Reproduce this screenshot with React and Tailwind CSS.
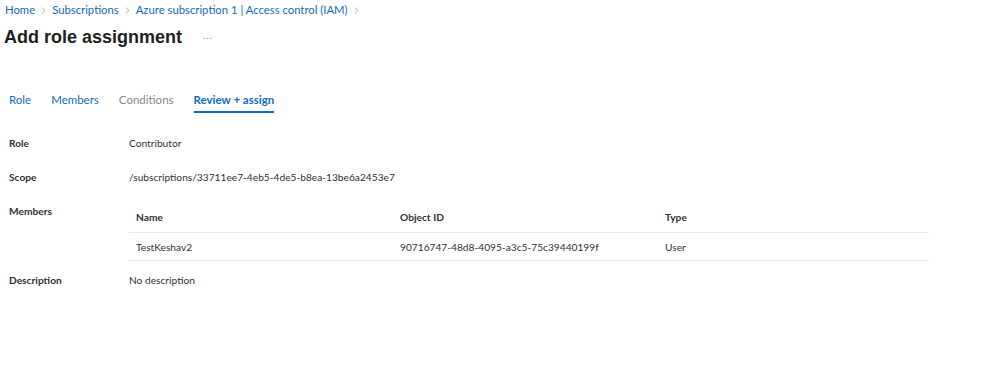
import { ChevronRight } from 'lucide-react';

const crumbs = ['Home', 'Subscriptions', 'Azure subscription 1 | Access control (IAM)'];

const tabs = [
  { label: 'Role', color: 'text-[#0f6cbd]' },
  { label: 'Members', color: 'text-[#0f6cbd]' },
  { label: 'Conditions', color: 'text-[#8a8886]' },
  { label: 'Review + assign', color: 'text-[#0f6cbd] font-bold', active: true },
];

const Row = ({ label, children, className = '' }) => (
  <div className={`flex ${className}`}>
    <div className="w-[120px] shrink-0 font-bold text-[#323130]">{label}</div>
    <div className="flex-1">{children}</div>
  </div>
);

export default function App() {
  return (
    <div
      className="w-[996px] h-[391px] bg-white text-[10.2px] leading-[14px] text-[#323130]"
      style={{ fontFamily: 'Lato, "Open Sans", sans-serif' }}
    >
      <nav className="flex items-center h-[19px] pl-[5px] pt-[1px] text-[11.3px] text-[#0f6cbd]">
        {crumbs.map((c) => (
          <span key={c} className="flex items-center">
            <span>{c}</span>
            <ChevronRight size={11} strokeWidth={1.5} className="mx-[3px] text-[#8a8886]" />
          </span>
        ))}
      </nav>

      <div className="flex items-center h-[36px] pl-[4px]">
        <h1
          className="text-[18px] font-bold text-[#201f1e]"
          style={{ fontFamily: '"Liberation Sans", Arial, sans-serif' }}
        >
          Add role assignment
        </h1>
        <span className="ml-[21px] text-[10px] text-[#8a8886] tracking-[1px] -mt-[4px]">...</span>
      </div>

      <div className="flex pl-[9px] mt-[37px] gap-[20px] text-[11.5px] leading-[16px]">
        {tabs.map((t) => (
          <div key={t.label} className={`pb-[3px] border-b-2 ${t.active ? 'border-[#0f6cbd]' : 'border-transparent'} ${t.color}`}>
            {t.label}
          </div>
        ))}
      </div>

      <div className="pl-[9px] pr-[67px] mt-[23px]">
        <Row label="Role" className="h-[34px]">Contributor</Row>
        <Row label="Scope" className="h-[34px]">/subscriptions/33711ee7-4eb5-4de5-b8ea-13be6a2453e7</Row>
        <Row label="Members">
          <div className="grid grid-cols-[264px_265px_1fr]">
            <div className="pl-[7px] pt-[6px] pb-[8px] border-b border-[#edebe9] font-bold">Name</div>
            <div className="pl-[7px] pt-[6px] pb-[8px] border-b border-[#edebe9] font-bold">Object ID</div>
            <div className="pl-[7px] pt-[6px] pb-[8px] border-b border-[#edebe9] font-bold">Type</div>
            <div className="pl-[7px] pt-[7px] pb-[6px] border-b border-[#edebe9]">TestKeshav2</div>
            <div className="pl-[7px] pt-[7px] pb-[6px] border-b border-[#edebe9]">90716747-48d8-4095-a3c5-75c39440199f</div>
            <div className="pl-[7px] pt-[7px] pb-[6px] border-b border-[#edebe9]">User</div>
          </div>
        </Row>
        <Row label="Description" className="mt-[12px]">No description</Row>
      </div>
    </div>
  );
}
